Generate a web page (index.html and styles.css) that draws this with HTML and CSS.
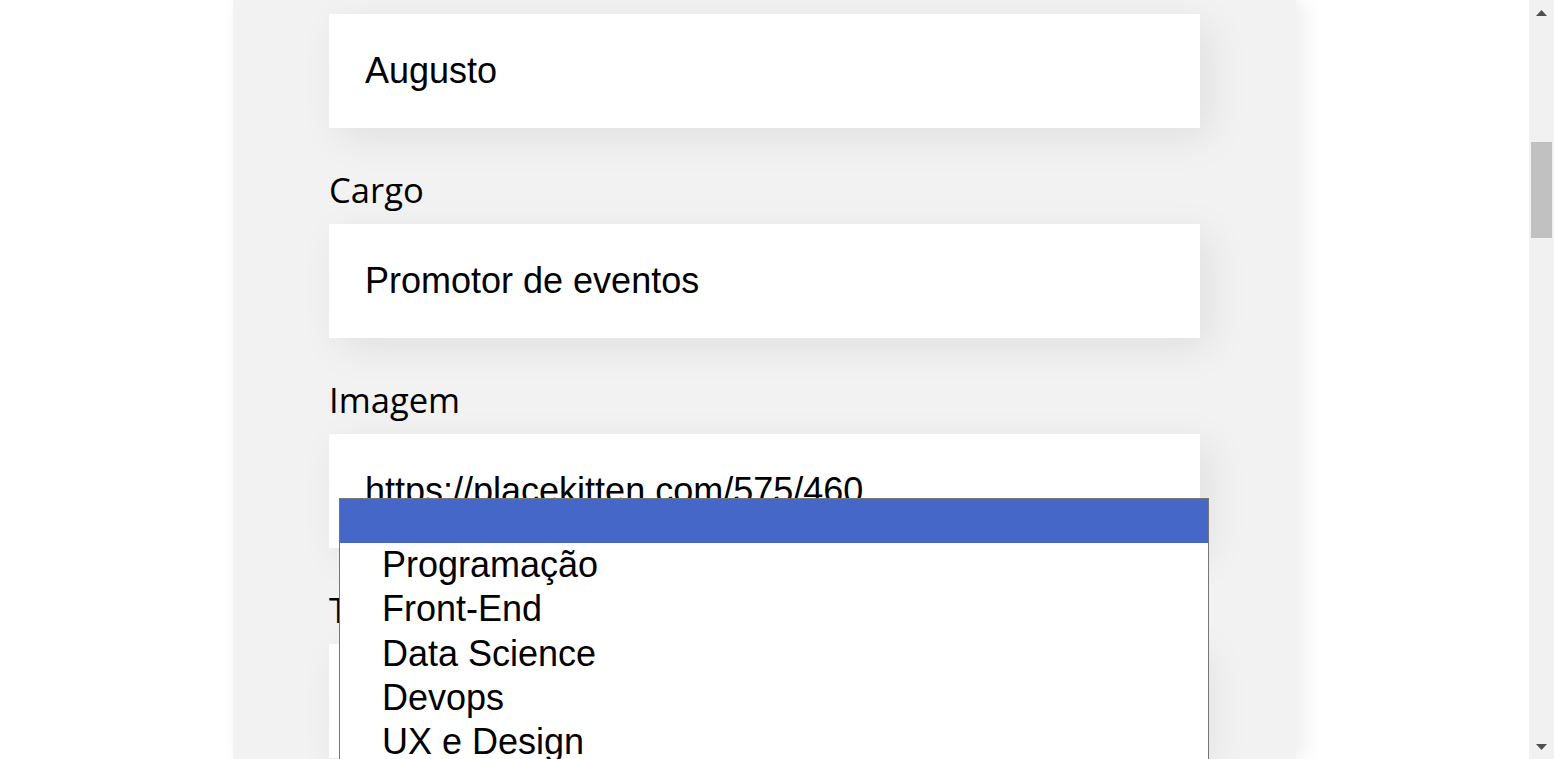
FILE: index.html
```html
<!DOCTYPE html>
<html lang="pt-BR">
<head>
<meta charset="utf-8">
<title>Formulário</title>
<link rel="stylesheet" href="styles.css">
</head>
<body>
<div class="viewport">
  <main class="page">
    <section class="panel">
      <form class="form">
        <div class="field">
          <label class="label">Nome</label>
          <input class="text" type="text" value="Augusto">
        </div>
        <div class="field">
          <label class="label">Cargo</label>
          <input class="text" type="text" value="Promotor de eventos">
        </div>
        <div class="field">
          <label class="label">Imagem</label>
          <input class="text" type="text" value="https://placekitten.com/575/460">
        </div>
        <div class="field">
          <label class="label">Time</label>
          <div class="select"></div>
        </div>
      </form>
    </section>
    <div class="dropdown">
      <div class="option selected">&nbsp;</div>
      <div class="option">Programação</div>
      <div class="option">Front-End</div>
      <div class="option">Data Science</div>
      <div class="option">Devops</div>
      <div class="option">UX e Design</div>
      <div class="option">Mobile</div>
      <div class="option">Inovação e Gestão</div>
    </div>
  </main>
  <div class="scrollbar">
    <div class="sb-arrow">
      <svg width="11" height="6" viewBox="0 0 11 6"><polygon points="5.5,0 11,6 0,6" fill="#505050"/></svg>
    </div>
    <div class="sb-track">
      <div class="sb-thumb"></div>
    </div>
    <div class="sb-arrow">
      <svg width="11" height="6" viewBox="0 0 11 6"><polygon points="0,0 11,0 5.5,6" fill="#505050"/></svg>
    </div>
  </div>
</div>
</body>
</html>
```

FILE: styles.css
```css
* { box-sizing: border-box; }

html, body {
  margin: 0;
  height: 100%;
  overflow: hidden;
  background: #ffffff;
}

.viewport {
  display: flex;
  height: 759px;
}

.page {
  position: relative;
  flex: 1;
  display: flex;
  justify-content: center;
  overflow: hidden;
}

.panel {
  width: 1063px;
  height: 100%;
  background: #f2f2f2;
  padding: 0 96px;
  box-shadow: 8px 0 20px rgba(0, 0, 0, 0.07);
}

.form {
  margin-top: -44px;
  display: flex;
  flex-direction: column;
  gap: 38px;
}

.field {
  display: flex;
  flex-direction: column;
}

.label {
  font-family: "Open Sans", "Noto Sans", sans-serif;
  font-size: 34.6px;
  line-height: 48px;
  color: #000;
  margin-bottom: 10px;
}

.text, .select {
  display: block;
  width: 100%;
  height: 114px;
  border: none;
  outline: none;
  background: #ffffff;
  padding: 0 36px;
  margin: 0;
  font-family: "Liberation Sans", Arial, sans-serif;
  font-size: 36px;
  color: #000;
  box-shadow: 10px 10px 40px rgba(0, 0, 0, 0.08);
}

.dropdown {
  position: absolute;
  left: 339px;
  top: 498px;
  width: 870px;
  background: #ffffff;
  border: 1px solid #767676;
  font-family: "Liberation Sans", Arial, sans-serif;
  font-size: 36px;
  color: #000;
}

.option {
  height: 44.25px;
  line-height: 44.25px;
  padding-left: 42px;
  white-space: nowrap;
}

.option.selected {
  background: #4567c8;
  height: 44px;
}

.scrollbar {
  width: 25px;
  height: 759px;
  background: #f1f1f1;
  display: flex;
  flex-direction: column;
}

.sb-arrow {
  height: 25px;
  display: flex;
  align-items: center;
  justify-content: center;
}

.sb-arrow svg { display: block; }

.sb-track {
  flex: 1;
  padding: 117px 2px 0 2px;
}

.sb-thumb {
  height: 96px;
  background: #c1c1c1;
}
```
